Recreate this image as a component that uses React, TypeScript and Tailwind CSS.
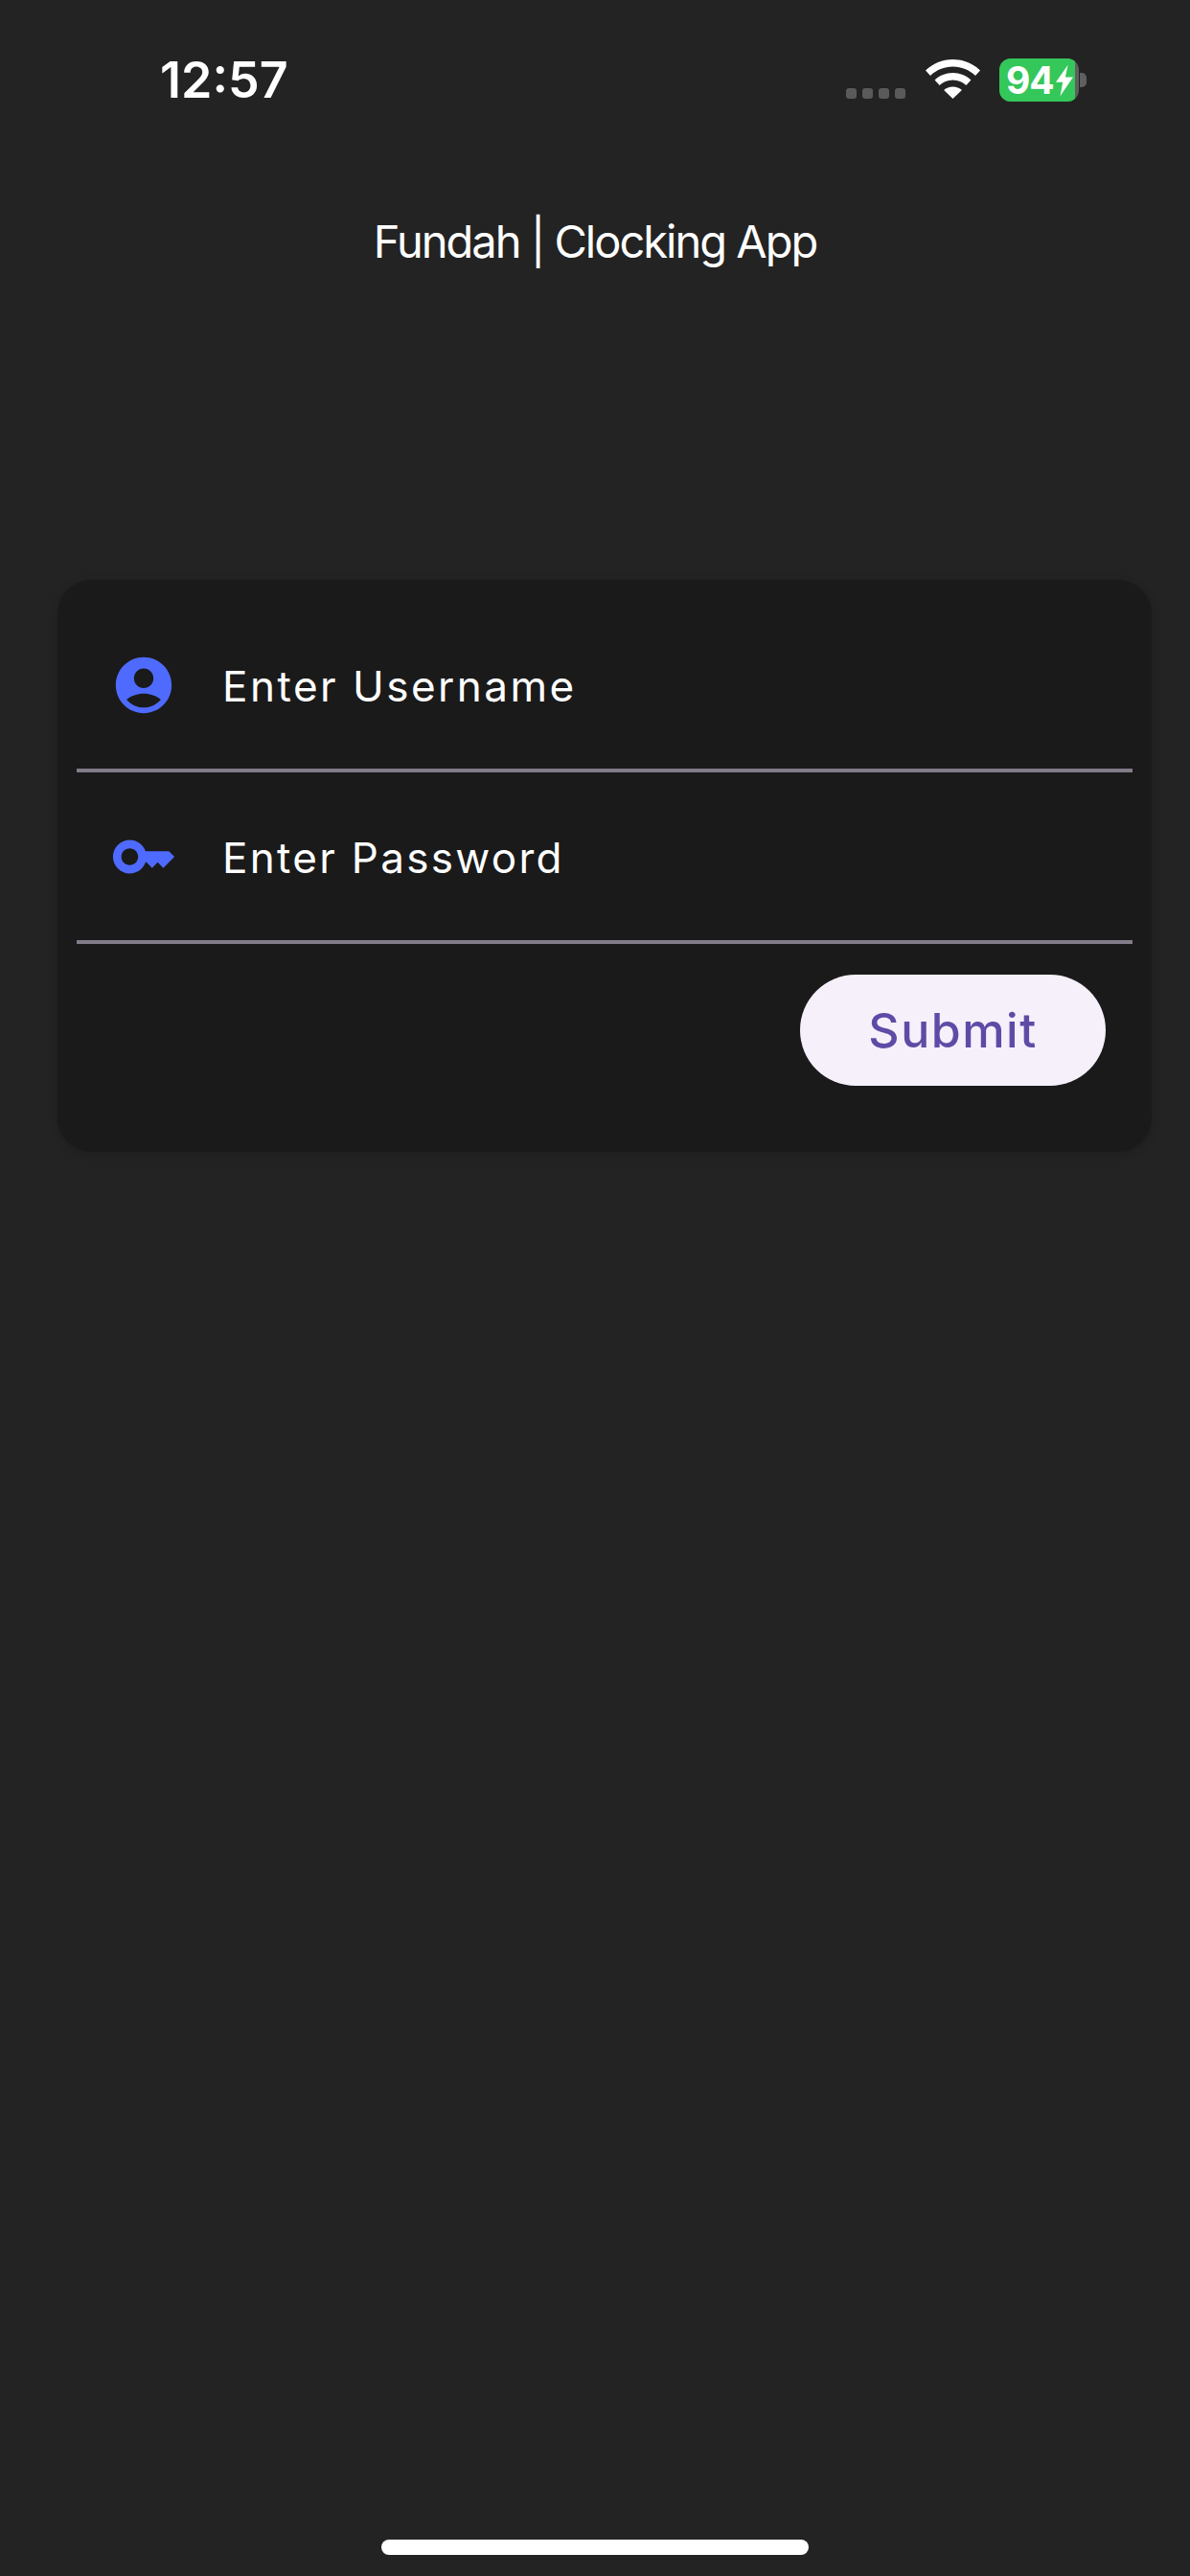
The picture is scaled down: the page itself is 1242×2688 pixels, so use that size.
export default function App() {
  return (
    <div className="w-[1242px] h-[2688px] bg-[#232323] flex flex-col font-['Inter','Liberation_Sans',sans-serif] text-white overflow-hidden">
      {/* Status bar */}
      <div className="h-[168px] pl-[167px] pr-[108px] pt-[53px] flex items-start justify-between">
        <span className="text-[52px] leading-[62px] font-semibold tracking-[0px]">12:57</span>
        <div className="flex items-start">
          <div className="flex gap-[6px] mt-[39px]">
            <div className="w-[11px] h-[11px] rounded-[3px] bg-[#5a5a5a]" />
            <div className="w-[11px] h-[11px] rounded-[3px] bg-[#5a5a5a]" />
            <div className="w-[11px] h-[11px] rounded-[3px] bg-[#5a5a5a]" />
            <div className="w-[11px] h-[11px] rounded-[3px] bg-[#5a5a5a]" />
          </div>
          <svg className="ml-[21px] mt-[9px]" width="57" height="41" viewBox="0 0 57 41">
            <path fill="#fff" d="M28.5 0C17.5 0 7.6 4.3 0 11.5l5 5.5C11.4 11 19.5 7.5 28.5 7.5S45.600 11 52 17l5-5.500C49.400 4.300 39.500 0 28.500 0z" />
            <path fill="#fff" d="M28.500 14c-7.300 0-13.900 2.800-18.900 7.500l5 5.500c3.600-3.300 8.400-5.400 13.900-5.400s10.300 2.100 13.900 5.400l5-5.500C42.400 16.800 35.800 14 28.500 14z" />
            <path fill="#fff" d="M28.500 28.500c-3.700 0-7 1.400-9.400 3.600L28.500 41l9.400-8.900c-2.400-2.200-5.700-3.600-9.400-3.600z" />
          </svg>
          <div className="ml-[20px] mt-[8px] flex items-center">
            <div className="w-[83px] h-[45px] rounded-[12px] overflow-hidden bg-[#5f5f5f]">
              <div className="w-[79px] h-full bg-[#34c759] flex items-center pl-[7px]">
                <span className="text-[39px] leading-none font-bold tracking-[-1px]">94</span>
                <svg className="ml-[2px] shrink-0" width="18" height="34" viewBox="0 0 20 36">
                  <path fill="#fff" d="M14 0L0 20h8L5 36 20 14h-9z" />
                </svg>
              </div>
            </div>
            <div className="ml-[1px] w-[7px] h-[15px] rounded-r-[5px] bg-[#5f5f5f]" />
          </div>
        </div>
      </div>

      {/* Title */}
      <div className="h-[73px] mt-[55px] flex items-start justify-center">
        <span className="text-[47px] leading-[58px] tracking-[-2px]">Fundah | Clocking App</span>
      </div>

      {/* Login card */}
      <div className="mt-[309px] ml-[60px] w-[1142px] pt-[22px] px-[20px] pb-[69px] bg-[#1a1a1a] rounded-[36px] shadow-[0_2px_10px_rgba(0,0,0,0.18)]">
        <div className="h-[179px] pl-[35px] flex items-center gap-[47px] border-b-4 border-[#827c89]">
          <svg width="70" height="70" viewBox="0 0 24 24" fill="#4f6bff">
            <path d="M12 2C6.48 2 2 6.48 2 12s4.48 10 10 10 10-4.48 10-10S17.520 2 12 2zm0 4c1.930 0 3.500 1.570 3.500 3.500S13.930 13 12 13s-3.500-1.570-3.500-3.500S10.070 6 12 6zm0 14c-2.030 0-4.430-.82-6.140-2.880C7.550 15.800 9.680 15 12 15s4.450.8 6.140 2.120C16.430 19.180 14.030 20 12 20z" />
          </svg>
          <span className="text-[44px] tracking-[2.5px] text-white translate-y-[1px]">Enter Username</span>
        </div>
        <div className="h-[179px] pl-[35px] flex items-center gap-[47px] border-b-4 border-[#827c89]">
          <svg width="70" height="70" viewBox="0 0 24 24" fill="#4f6bff">
            <path d="M21 10h-8.350C11.830 7.670 9.610 6 7 6c-3.310 0-6 2.690-6 6s2.690 6 6 6c2.610 0 4.830-1.670 5.650-4H13l2 2 2-2 2 2 4-4.040L21 10zM7 15c-1.650 0-3-1.350-3-3s1.350-3 3-3 3 1.350 3 3-1.350 3-3 3z" />
          </svg>
          <span className="text-[44px] tracking-[2.3px] text-white translate-y-[1px]">Enter Password</span>
        </div>
        <div className="mt-[32px] pr-[28px] flex justify-end">
          <button className="w-[319px] h-[116px] rounded-full bg-[#f5f0fa] text-[#5f4ba6] text-[50px] font-medium tracking-[1.5px]">
            Submit
          </button>
        </div>
      </div>

      {/* Home indicator */}
      <div className="mt-auto mb-[22px] mx-auto w-[446px] h-[16px] rounded-full bg-white" />
    </div>
  );
}
